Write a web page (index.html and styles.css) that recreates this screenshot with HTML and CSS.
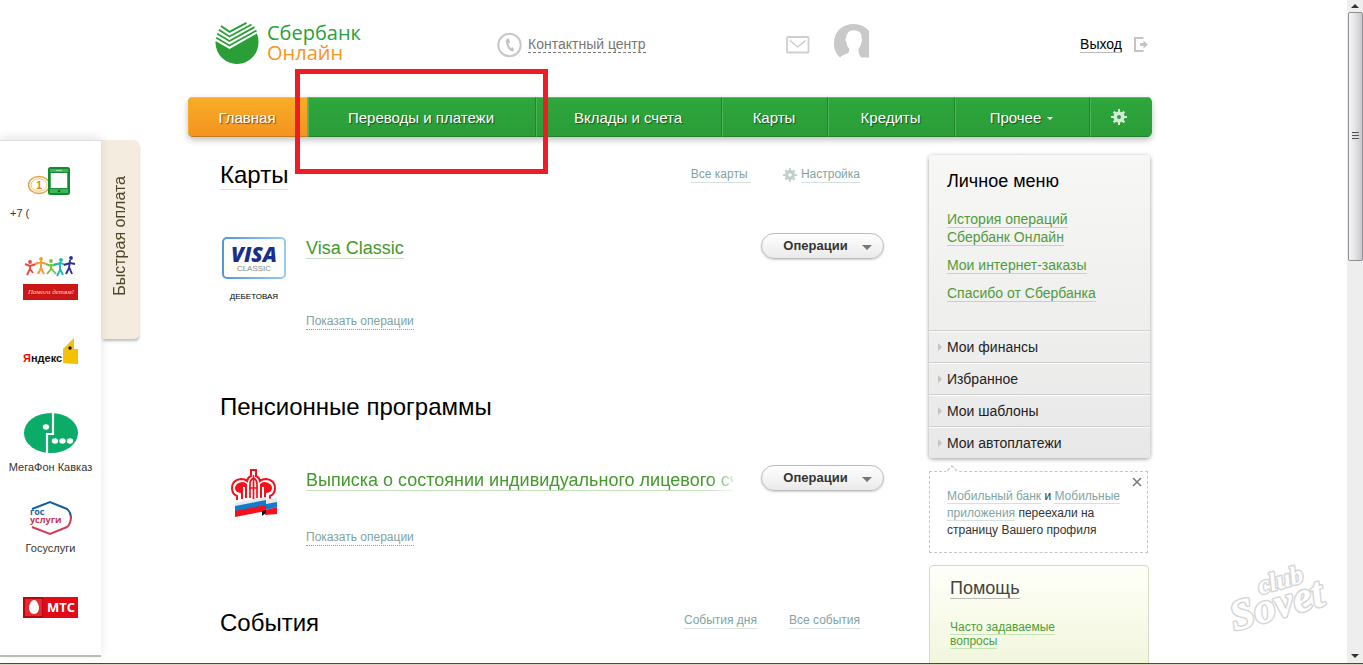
FILE: index.html
```html
<!DOCTYPE html>
<html lang="ru">
<head>
<meta charset="utf-8">
<title>Сбербанк Онлайн</title>
<link rel="stylesheet" href="styles.css">
</head>
<body>
<svg width="0" height="0" class="defs" aria-hidden="true">
  <symbol id="gear" viewBox="0 0 16 16">
    <g fill="currentColor">
      <path fill-rule="evenodd" d="M8 2.400a5.600 5.600 0 1 0 0 11.200A5.600 5.600 0 0 0 8 2.400zm0 3.600a2 2 0 1 1 0 4 2 2 0 0 1 0-4z"/>
      <path d="M7 0h2v3H7zM7 13h2v3H7zM0 7h3v2H0zM13 7h3v2h-3z"/>
      <path d="M6.800 .500h2.400v3H6.800zM6.800 12.500h2.400v3H6.800zM.500 6.800h3v2.400h-3zM12.500 6.800h3v2.400h-3z" transform="rotate(45 8 8)"/>
    </g>
  </symbol>
</svg>
<div class="window">
  <div class="page">
    <div class="container">
      <header class="header">
        <a class="logo" href="#" aria-label="Сбербанк Онлайн">
          <svg width="45" height="42" viewBox="0 0 45 42">
            <path fill="#2a9f38" d="M.600 19L14.500 27L42 11.500Q43.500 15.500 43.500 20A21.300 21.300 0 0 1 .500 21z"/>
            <g fill="none" stroke="#2a9f38" stroke-width="1.900">
              <path d="M1.200 15.800L14.500 23.500L41.500 8.500"/>
              <path d="M2.200 11.800L14.500 19L39.500 5.200"/>
              <path d="M3.800 7.800L14.500 14.500L36.500 2.500"/>
              <path d="M6 4L14.500 9.800L31.500 .900"/>
            </g>
          </svg>
          <span class="logo-text"><span>Сбербанк</span><span class="logo-sub">Онлайн</span></span>
        </a>
        <a class="contact" href="#">
          <svg width="25" height="26" viewBox="0 0 25 26">
            <circle cx="12.500" cy="13" r="11.200" fill="none" stroke="#c8c8c8" stroke-width="2"/>
            <path fill="#c3c3c3" d="M9.500 7l2.400-.600 1.200 4-1.800 1q.6 2.700 2.500 4.500l1.700-.900 1.700 2.800-1.300 1.700q-2.400.200-4.700-3Q7.800 11.500 9.500 7z"/>
          </svg>
          <span>Контактный центр</span>
        </a>
        <div class="user">
          <a href="#" aria-label="Почта"><svg width="24" height="18" viewBox="0 0 24 18">
            <rect x="1" y="1" width="21.500" height="15.500" rx="1" fill="#fff" stroke="#cfcfcf" stroke-width="1.800"/>
            <path d="M4 4.500l7.700 6.500L19.500 4.500" fill="none" stroke="#c8c8c8" stroke-width="1.300"/>
          </svg></a>
          <a class="avatar" href="#" aria-label="Профиль"><svg width="36" height="34" viewBox="0 0 36 34">
            <path fill="#c9c9c9" d="M6 33.500A18 18 0 0 1 0 19C0 7 9 0 20 0q9 0 15 7V33.500h-8q-3-4-2.500-8.500 3-3.500 3-7.500 1.500-2 0-3 1-8-8-8.200-7 .300-7.500 8-1.500 1.500.2 3.500.5 4.500 3 7 .500 5-4 5.500-4 1.500-5.200 3.200z"/>
          </svg></a>
        </div>
        <a class="exit" href="#"><span>Выход</span>
          <svg width="14" height="15" viewBox="0 0 14 15"><path d="M9.500 1H1v13h8.500" fill="none" stroke="#c4c4c4" stroke-width="2"/><path fill="#c4c4c4" d="M6 6h3.500V3.500L14 7.500l-4.500 4V9H6z"/></svg>
        </a>
      </header>

      <nav class="nav">
        <a class="active" href="#">Главная</a>
        <a href="#">Переводы и платежи</a>
        <a href="#">Вклады и счета</a>
        <a href="#">Карты</a>
        <a href="#">Кредиты</a>
        <a href="#">Прочее <i class="caret"></i></a>
        <a href="#" aria-label="Настройки"><svg width="16" height="16"><use href="#gear"/></svg></a>
      </nav>

      <div class="columns">
        <main class="main">
          <section class="product-section">
            <div class="section-head">
              <h2><a href="#">Карты</a></h2>
              <div class="actions"><a class="soft" href="#">Все карты&nbsp;</a>
                <span class="settings"><svg width="14" height="14"><use href="#gear"/></svg><a class="soft" href="#">Настройка</a></span></div>
            </div>
            <article class="product">
              <div class="product-icon">
                <svg width="64" height="42" viewBox="0 0 64 42">
                  <defs><linearGradient id="edge"><stop stop-color="#5596d5"/><stop offset="1" stop-color="#98cbf4"/></linearGradient></defs>
                  <rect x="1" y="1" width="62" height="40" rx="4" fill="#fffefb" stroke="url(#edge)" stroke-width="2"/>
                  <text class="visa" x="32" y="25" text-anchor="middle">VISA</text>
                  <text class="visa-type" x="32" y="34" text-anchor="middle">CLASSIC</text>
                </svg>
                <span>ДЕБЕТОВАЯ</span>
              </div>
              <div class="product-info">
                <a class="product-title" href="#">Visa Classic</a>
                <a class="show spaced" href="#">Показать операции</a>
              </div>
              <button class="operations" type="button">Операции<i></i></button>
            </article>
          </section>

          <section class="product-section">
            <div class="section-head"><h2>Пенсионные программы</h2></div>
            <article class="product">
              <div class="product-icon">
                <svg width="46" height="48" viewBox="0 0 46 48">
                  <path d="M6 31v-4Q1 25 1 19q0-8 9-9 4 0 6 2 1-4 4-5V1h5v6q3 1 4 5 2-2 6-2 9 1 9 9 0 6-5 8v3" fill="#fff" stroke="#f5111b" stroke-width="2"/>
                  <path fill="#f5111b" d="M9 13.500q4-1.500 7 1.500v14h-2V18h-2v12h-2v-6Q4 23.500 4 19q0-4 5-5.500zM36 13.500q-4-1.500-7 1.500v14h2V18h2v12h2v-6q6-.500 6-5 0-4-5-5.500z"/>
                  <path d="M22.500 6v24M19 29V15q0-4 3.500-6 3.500 2 3.500 6v14M18 19h9" fill="none" stroke="#f5111b" stroke-width="1.700"/>
                  <path fill="#e5eaee" d="M4 34l31-6v6L4 40zM35 30l11-1v6l-11 2z"/>
                  <path fill="#147bcb" d="M4 37l31-6v6L4 43zM35 35l11-2v5l-11 3z"/>
                  <path fill="#f5111b" d="M4 42l31-6v6L4 48zM35 41l11-3v7l-12 1z"/>
                  <path fill="#111" d="M31 42l4-1v3l-4 3z"/>
                </svg>
              </div>
              <div class="product-info">
                <a class="product-title faded" href="#">Выписка о состоянии индивидуального лицевого счета</a>
                <a class="show" href="#">Показать операции</a>
              </div>
              <button class="operations" type="button">Операции<i></i></button>
            </article>
          </section>

          <section class="product-section">
            <div class="section-head">
              <h2>События</h2>
              <div class="actions events"><a class="soft" href="#">События дня</a><a class="soft" href="#">Все события</a></div>
            </div>
          </section>
        </main>

        <aside class="sidebar">
          <section class="personal">
            <h3>Личное меню</h3>
            <ul class="links">
              <li><a href="#">История операций Сбербанк Онлайн</a></li>
              <li><a href="#">Мои интернет-заказы</a></li>
              <li><a href="#">Спасибо от Сбербанка</a></li>
            </ul>
            <ul class="groups">
              <li><a href="#">Мои финансы</a></li>
              <li><a href="#">Избранное</a></li>
              <li><a href="#">Мои шаблоны</a></li>
              <li><a href="#">Мои автоплатежи</a></li>
            </ul>
          </section>
          <section class="notice">
            <svg class="notch" width="12" height="7" viewBox="0 0 12 7"><path fill="#fff" d="M0 5h12v2H0z"/><path d="M1 6l5-5 5 5" fill="none" stroke="#ccc" stroke-width="1.300" stroke-dasharray="4 1.500"/></svg>
            <button class="close" type="button" aria-label="Закрыть"><svg width="10" height="10" viewBox="0 0 10 10"><path d="M1 1l8 8M9 1L1 9" stroke="#777" stroke-width="1.500"/></svg></button>
            <p><a class="soft" href="#">Мобильный банк</a> и <a class="soft" href="#">Мобильные приложения</a> переехали на страницу Вашего профиля</p>
          </section>
          <section class="help">
            <h3><a href="#">Помощь</a></h3>
            <p><a href="#">Часто задаваемые вопросы</a></p>
          </section>
        </aside>
      </div>
    </div>

    <div class="quick">
      <div class="quick-list">
        <a class="quick-item phone" href="#">
          <svg width="48" height="28" viewBox="0 0 48 28">
            <ellipse cx="12" cy="18" rx="10.500" ry="8.500" fill="#fff8e8" stroke="#e5a34f" stroke-width="1.500"/>
            <ellipse cx="12" cy="18" rx="8" ry="6.200" fill="#fff" stroke="#efc488" stroke-width="1"/>
            <text class="coin" x="12" y="22" text-anchor="middle">1</text>
            <rect x="22" y="1" width="20" height="26" rx="1.500" fill="#3fb558" stroke="#148933" stroke-width="2"/>
            <path fill="#fff" d="M24 6h16v15H24z"/><path fill="none" stroke="#168a35" d="M23 5.500h18M23 21.500h18"/><path fill="#9fdcab" d="M29 3h6v1h-6z"/><circle cx="32" cy="24" r="1.300" fill="#0c6c25"/>
          </svg>
          <span>+7 (</span>
        </a>
        <a class="quick-item children" href="#">
          <svg width="55" height="44" viewBox="0 0 55 44">
            <g fill="none" stroke-width="1.900" stroke-linejoin="round">
              <path stroke="#ea4942" d="M2 8l5 2 6-2M7 9v4l-3 6M7 13l3 4"/><path stroke="#f49c2d" d="M12 8l6-2 5 2M18 5v7l-3 6M18 12l3 6"/>
              <path stroke="#79c143" d="M23 8l5 2 5-2M28 8v5l-4 5M28 12l5 6"/><path stroke="#21b6b4" d="M31 9l7-2 4 2M37 6v8l-3 6M37 13l3 6"/><path stroke="#2d3192" d="M41 9l6-2 5 1M47 4l-1 8-3 6M46 11l3 7"/>
            </g>
            <circle cx="7" cy="6" r="1.900" fill="#ea4942"/><circle cx="18" cy="3" r="1.900" fill="#f49c2d"/><circle cx="28" cy="5" r="1.900" fill="#79c143"/><circle cx="38" cy="4" r="1.900" fill="#21b6b4"/><circle cx="48" cy="2" r="1.900" fill="#2d3192"/>
            <path fill="#cc1515" d="M0 28h55v16H0z"/>
            <text class="gift" x="28" y="38" text-anchor="middle">Помоги детям!</text>
          </svg>
        </a>
        <a class="quick-item yandex-item" href="#">
          <svg width="56" height="28" viewBox="0 0 56 28">
            <text class="yandex" x="0" y="25"><tspan fill="#f00">Я</tspan>ндекс</text>
            <path fill="#ffd21a" d="M40 12L51 1v11h4v15l-15-1z"/><path fill="#e3ab00" d="M40 12L51 1v11l-5 6-6 2z" opacity=".45"/><path fill="#f5c000" d="M40 20l6-2 4-6h5v15l-15-1z"/><circle cx="47" cy="11" r="1.700" fill="#111"/>
          </svg>
        </a>
        <a class="quick-item megafon" href="#">
          <svg width="54" height="40" viewBox="0 0 54 40">
            <ellipse cx="27" cy="20" rx="27" ry="20" fill="#0bac67"/>
            <path d="M29 0v21h-6v19" fill="none" stroke="#fff" stroke-width="2.200"/>
            <g fill="#fff"><ellipse cx="22" cy="14" rx="3.200" ry="2.700"/><ellipse cx="31" cy="28" rx="3.200" ry="2.700"/><ellipse cx="38.500" cy="28" rx="3.200" ry="2.700"/><ellipse cx="46" cy="28" rx="3.200" ry="2.700"/></g>
          </svg>
          <span>МегаФон Кавказ</span>
        </a>
        <a class="quick-item" href="#">
          <svg width="44" height="36" viewBox="0 0 44 36">
            <path d="M3 9L21 2l17 7q4 3 4 10" fill="none" stroke="#145f9e" stroke-width="2"/>
            <path d="M42 16q0 8-4 11l-17 7L3 27" fill="none" stroke="#cf3e58" stroke-width="2"/>
            <text class="gos" x="1" y="15" fill="#1865a0">гос</text><text class="gos" x="1" y="23" fill="#c43855">услуги</text>
          </svg>
          <span>Госуслуги</span>
        </a>
        <a class="quick-item mobile" href="#">
          <svg width="55" height="21" viewBox="0 0 55 21">
            <path fill="#e30a17" d="M0 0h55v21H0z"/><path fill="#b90712" d="M0 0h20v21H0z"/><path fill="#e52a30" d="M2 2h17v17H2z"/><path fill="#fff" d="M11 3c3 0 5 5 5 8s-2 6-5 6-5-3-5-6 2-8 5-8z"/>
            <text class="mts" x="24" y="15">МТС</text>
          </svg>
        </a>
      </div>
      <button class="quick-tab" type="button"><span>Быстрая оплата</span></button>
    </div>

    <div class="highlight"></div>
    <svg class="watermark" width="100" height="72" viewBox="0 0 100 72" aria-hidden="true">
      <g transform="rotate(-16 50 40)">
        <text class="mark-big" x="-3" y="56">Sovet</text>
        <text class="mark-small" x="32" y="28">club</text>
      </g>
    </svg>
  </div>
  <div class="scrollbar" aria-hidden="true">
    <b class="up"></b>
    <div class="thumb"><i></i><i></i><i></i></div>
    <b class="down"></b>
  </div>
</div>
<footer class="edge"></footer>
</body>
</html>
```
FILE: styles.css
```css
* { box-sizing: border-box; }
body {
  margin: 0;
  height: 100vh;
  overflow: hidden;
  display: flex;
  flex-direction: column;
  background: #fff;
  color: #000;
  font-family: "Liberation Sans", Arial, sans-serif;
  font-size: 14px;
}
h2, h3, p, ul { margin: 0; padding: 0; font-weight: normal; }
ul { list-style: none; }
a { color: inherit; text-decoration: none; }
svg { display: block; flex: none; }
button { font-family: inherit; cursor: pointer; }
.defs { position: absolute; }

.window { flex: 1; min-height: 0; display: flex; }
.page { flex: 1; position: relative; overflow: hidden; padding-right: 7px; }
.container { width: 100%; max-width: 964px; margin: 0 auto; }
.edge { height: 2px; background: #d9d5bd; border-top: 1px solid #4a4a35; }

/* Header */
.header {
  display: grid;
  grid-template-columns: 282px 289px 1fr auto;
  align-items: center;
  height: 97px;
  padding: 0 4px 8px 27px;
}
.logo { display: flex; align-items: center; gap: 7px; padding-bottom: 4px; }
.logo-text { display: flex; flex-direction: column; font: 20px/20px "Open Sans", sans-serif; color: #2a9f38; }
.logo-sub { color: #f7941e; }
.contact { display: flex; align-items: center; gap: 6px; color: #777; }
.contact span { border-bottom: 1px dashed #777; }
.user { display: flex; align-items: center; gap: 24px; }
.avatar { padding-bottom: 8px; }
.exit { display: flex; align-items: center; gap: 12px; }
.exit span { border-bottom: 1px solid #bbb; }

/* Navigation */
.nav {
  display: grid;
  grid-template-columns: 120fr 228fr 186fr 106fr 127fr 135fr 62fr;
  height: 40px;
  border-radius: 5px;
  overflow: hidden;
  background: linear-gradient(#2ea73c, #2b9c38);
  box-shadow: 0 3px 6px rgba(0, 0, 0, .25);
}
.nav a {
  display: flex;
  align-items: center;
  justify-content: center;
  gap: 6px;
  padding-right: 2px;
  color: #fff;
  font-size: 15px;
  text-shadow: 1px 1px 1px rgba(0, 0, 0, .5);
  border-top: 1px solid #5bbb65;
  border-bottom: 1px solid #1f7f2b;
  border-left: 1px solid #4fb35a;
  border-right: 1px solid #23862f;
}
.nav a.active {
  background: linear-gradient(#f8ad25, #f49322);
  border-color: #f9bb4b #d98420 #c77a1a #f8ad25;
}
.nav a:last-child { padding-right: 6px; color: #d3ecd5; border-right: 0; }
.caret { border: 3px solid transparent; border-top-color: #fff; border-bottom: 0; margin-top: 3px; }

/* Columns */
.columns { display: grid; grid-template-columns: 1fr 221px; padding: 18px 2px 0 0; }
.main { padding: 6px 45px 0 32px; min-width: 0; }
.section-head { display: flex; justify-content: space-between; align-items: flex-start; height: 32px; padding-right: 24px; }
.section-head h2 { font-size: 24px; line-height: 28px; }
.section-head h2 a { display: block; border-bottom: 1px solid #e0e0e0; }
.actions { display: flex; gap: 32px; padding-top: 6px; font-size: 12px; line-height: 15px; }
.actions.events { padding-top: 4px; }
.settings { display: flex; align-items: center; gap: 4px; color: #bfd0cc; }
.soft { color: #7fa5a2; border-bottom: 1px solid #d3e1df; }
.product-section { padding-bottom: 63px; }
.product {
  display: grid;
  grid-template-columns: 66px 1fr 123px;
  column-gap: 20px;
  align-items: start;
  margin-top: 40px;
}
.product-icon { display: flex; flex-direction: column; align-items: center; gap: 13px; padding: 4px 0 0 2px; font-size: 8px; line-height: 10px; }
.visa { font: italic 800 21px "Open Sans", sans-serif; fill: #182f8c; }
.visa-type { font: 8px "Liberation Sans", sans-serif; fill: #888; }
.product-info { min-width: 0; display: flex; flex-direction: column; align-items: flex-start; padding: 5px 8px 0 0; }
.product-title { max-width: 100%; font-size: 18px; line-height: 20px; color: #43992c; border-bottom: 1px solid #c5e0bd; white-space: nowrap; overflow: hidden; }
.faded { -webkit-mask-image: linear-gradient(to left, rgba(0, 0, 0, .2), #000 24px); mask-image: linear-gradient(to left, rgba(0, 0, 0, .2), #000 24px); }
.show { margin-top: 39px; font-size: 12px; line-height: 15px; color: #7fa3a0; border-bottom: 1px dotted #7fa3a0; }
.show.spaced { margin-top: 55px; }
.operations {
  display: flex;
  align-items: center;
  justify-content: center;
  gap: 14px;
  height: 26px;
  padding: 0 0 1px 10px;
  border: 1px solid #bcbcbc;
  border-radius: 13px;
  background: linear-gradient(#fefefe, #eaeaea);
  box-shadow: 0 1px 2px rgba(0, 0, 0, .2);
  color: #333;
  font-size: 13px;
  font-weight: bold;
}
.operations i { border: 5px solid transparent; border-top-color: #777; border-bottom: 0; margin-top: 3px; }

/* Sidebar */
.personal {
  border-radius: 4px;
  background: linear-gradient(#f7f7f5, #e8e8e8);
  box-shadow: 0 1px 4px rgba(0, 0, 0, .4);
}
.personal h3 { padding: 16px 18px 0; font-size: 18px; line-height: 20px; }
.links { padding: 19px 36px 18px 18px; line-height: 18px; color: #519a3c; }
.links li { margin-bottom: 10px; }
.links a { border-bottom: 1px solid #bbdcae; }
.groups li { border-top: 1px solid #d0d0d0; }
.groups a { display: flex; align-items: center; gap: 5px; height: 31px; padding-left: 9px; border-top: 1px solid #fafafa; color: #222; }
.groups a::before { content: ""; border: 4px solid transparent; border-left-color: #c3c3c3; border-right: 0; }
.notice { position: relative; margin: 13px 2px 12px 0; padding: 16px 20px 13px 17px; border: 1px dashed #c6c6c6; font-size: 12px; line-height: 17px; color: #333; }
.notch { position: absolute; left: 16px; top: -7px; }
.close { position: absolute; right: 5px; top: 5px; padding: 0; border: 0; background: none; }
.help { margin-right: 1px; height: 180px; padding: 12px 70px 0 20px; border: 1px solid #d9d8c3; border-radius: 4px; background: linear-gradient(#fffff9, #f2f6dc 100px); color: #4b9f3a; }
.help h3 { font-size: 18px; line-height: 20px; color: #444; }
.help h3 a { display: inline-block; border-bottom: 1px solid #bbb; }
.help p { margin-top: 21px; font-size: 12px; line-height: 14px; }
.help p a { border-bottom: 1px solid #c6e3b8; }

/* Quick payment panel floats over the page */
.quick { position: absolute; left: 0; top: 140px; display: flex; align-items: flex-start; }
.quick-list {
  display: flex;
  flex-direction: column;
  align-items: center;
  width: 101px;
  height: 517px;
  padding-top: 26px;
  background: #fff;
  border-bottom: 2px solid #bbb;
  border-top: 1px solid #ddd;
  box-shadow: 0 -3px 10px rgba(0, 0, 0, .1);
  position: relative;
}
.quick-item { display: flex; flex-direction: column; align-items: center; gap: 6px; width: 100%; height: 84px; padding-top: 8px; font-size: 11px; line-height: 12px; color: #333; }
.quick-item.phone { padding-top: 0; gap: 12px; }
.phone span { align-self: flex-start; padding-left: 10px; }
.quick-item.children { padding-top: 8px; }
.quick-item.yandex-item { padding-top: 8px; }
.quick-item.megafon { padding-top: 0; gap: 8px; margin-top: -6px; height: 90px; }
.quick-item.megafon { margin-top: 0; padding-top: 2px; height: 84px; }
.quick-item.mobile { padding-top: 24px; }
.coin { font: bold 11px "Liberation Sans", sans-serif; fill: #df8b27; }
.gift { font: italic 7px "Liberation Serif", serif; fill: #ffd9cf; }
.yandex { font: bold 11px "Liberation Sans", sans-serif; fill: #111; }
.gos { font: bold 9px "Open Sans", sans-serif; }
.mts { font: bold 13px "Open Sans", sans-serif; fill: #fff; }
.quick-tab {
  display: flex;
  align-items: center;
  justify-content: center;
  width: 38px;
  height: 199px;
  padding: 0;
  border: 0;
  border-radius: 0 5px 5px 0;
  background: #f4eddf;
  box-shadow: 1px 3px 3px -1px rgba(80, 90, 100, .4);
  color: #4f4527;
  font-size: 16px;
}
.quick-tab span { writing-mode: vertical-rl; transform: rotate(180deg); padding-top: 8px; }

.highlight { position: absolute; left: 295px; top: 69px; width: 253px; height: 105px; border: 5px solid #ee1c25; }
.watermark { position: absolute; right: 16px; bottom: 30px; overflow: visible; }
.watermark text { font-family: "Liberation Serif", serif; font-style: italic; font-weight: bold; fill: #fff; stroke: #d6d6d6; stroke-width: 3px; stroke-linejoin: round; paint-order: stroke; }
.watermark .mark-big { font-size: 43px; }
.watermark .mark-small { font-size: 26px; }

/* Scrollbar */
.scrollbar { width: 16px; display: flex; flex-direction: column; align-items: center; background: #eee; padding: 4px 0 5px; }
.thumb {
  display: flex;
  flex-direction: column;
  align-items: center;
  justify-content: center;
  gap: 1px;
  width: 15px;
  height: 38%;
  margin: 4px 0 auto;
  border: 1px solid #8f8f93;
  border-radius: 2px;
  background: linear-gradient(90deg, #f5f5f5, #e5e5e8 45%, #c8c8cc);
}
.thumb i { width: 7px; height: 2px; background: #555; border-bottom: 1px solid #ddd; }
.up { border: 4px solid transparent; border-bottom-color: #333; border-top: 0; }
.down { border: 4px solid transparent; border-top-color: #333; border-bottom: 0; }
```
